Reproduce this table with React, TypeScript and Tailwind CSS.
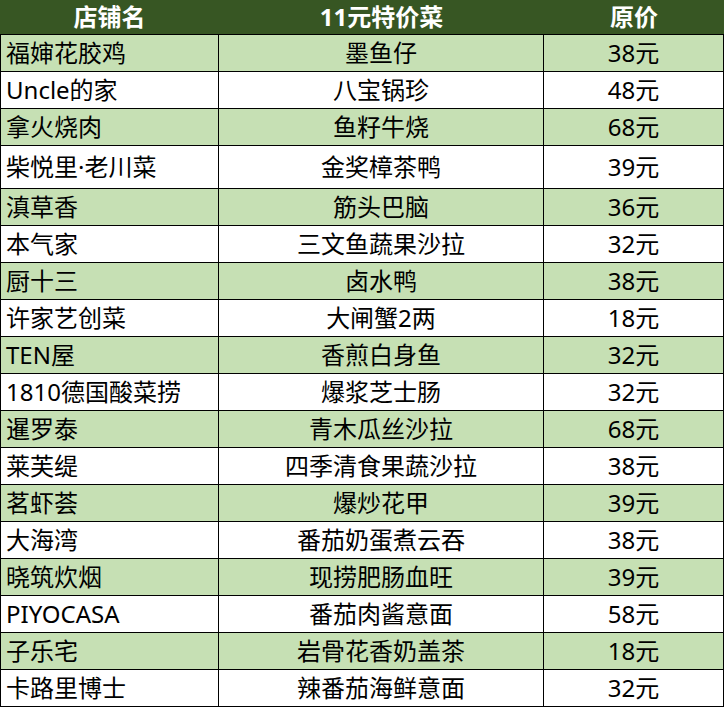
import React from "react";

const rows: [string, string, string][] = [
  ["福婶花胶鸡", "墨鱼仔", "38元"],
  ["Uncle的家", "八宝锅珍", "48元"],
  ["拿火烧肉", "鱼籽牛烧", "68元"],
  ["柴悦里·老川菜", "金奖樟茶鸭", "39元"],
  ["滇草香", "筋头巴脑", "36元"],
  ["本气家", "三文鱼蔬果沙拉", "32元"],
  ["厨十三", "卤水鸭", "38元"],
  ["许家艺创菜", "大闸蟹2两", "18元"],
  ["TEN屋", "香煎白身鱼", "32元"],
  ["1810德国酸菜捞", "爆浆芝士肠", "32元"],
  ["暹罗泰", "青木瓜丝沙拉", "68元"],
  ["莱芙缇", "四季清食果蔬沙拉", "38元"],
  ["茗虾荟", "爆炒花甲", "39元"],
  ["大海湾", "番茄奶蛋煮云吞", "38元"],
  ["晓筑炊烟", "现捞肥肠血旺", "39元"],
  ["PIYOCASA", "番茄肉酱意面", "58元"],
  ["子乐宅", "岩骨花香奶盖茶", "18元"],
  ["卡路里博士", "辣番茄海鲜意面", "32元"],
];

export default function App() {
  return (
    <div
      className="w-[725px] h-[708px] bg-white text-black"
      style={{ fontFamily: '"Noto Sans", "Noto Sans CJK SC", sans-serif' }}
    >
      <div className="w-[724px] flex flex-col">
        <div className="flex h-[35px] border-b border-black bg-[#375623] text-white font-bold text-[24px] leading-none">
          <div className="w-[219px] flex items-center justify-center">店铺名</div>
          <div className="w-[325px] flex items-center justify-center">11元特价菜</div>
          <div className="w-[180px] flex items-center justify-center">原价</div>
        </div>
        {rows.map((r, i) => (
          <div
            key={i}
            className={`flex border-b border-l border-black text-[24px] leading-none ${
              i === 3 ? "h-[43px]" : "h-[37px]"
            } ${i % 2 === 0 ? "bg-[#c6e0b4]" : "bg-white"}`}
          >
            <div className="w-[218px] border-r border-black flex items-center pl-[5px] whitespace-nowrap">
              {r[0]}
            </div>
            <div className="w-[325px] border-r border-black flex items-center justify-center whitespace-nowrap">
              {r[1]}
            </div>
            <div className="w-[180px] border-r border-black flex items-center justify-center whitespace-nowrap">
              {r[2]}
            </div>
          </div>
        ))}
      </div>
    </div>
  );
}
